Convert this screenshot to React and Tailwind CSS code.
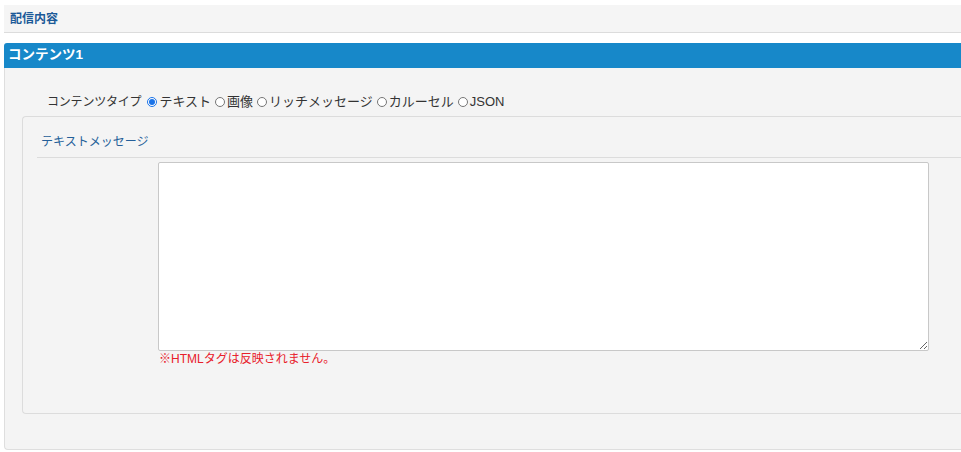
const CONTENT_TYPES = [
  { key: "text", label: "テキスト", checked: true },
  { key: "image", label: "画像" },
  { key: "rich", label: "リッチメッセージ" },
  { key: "carousel", label: "カルーセル" },
  { key: "json", label: "JSON" },
];

function Radio({ checked }) {
  return (
    <span
      className={`mx-[1px] inline-flex h-[10px] w-[10px] shrink-0 items-center justify-center rounded-full border ${
        checked ? "border-[#1a73e8]" : "border-[#767676]"
      } bg-white`}
    >
      {checked && <span className="h-[6px] w-[6px] rounded-full bg-[#1a73e8]" />}
    </span>
  );
}

export default function App() {
  return (
    <div
      className="h-[452px] w-[961px] overflow-hidden bg-white text-[12px] text-[#333]"
      style={{ fontFamily: '"Liberation Sans", "Noto Sans CJK JP", sans-serif' }}
    >
      <div className="ml-[4px] mt-[5px] flex h-[28px] items-center border-b border-[#dcdcdc] bg-[#f5f5f5] pl-[6px]">
        <span className="pt-[1px] font-bold text-[#1c5a98]">配信内容</span>
      </div>

      <div className="ml-[4px] mt-[10px]">
        <div className="flex h-[25px] items-center rounded-tl-[3px] bg-[#1788c9] pl-[4px] text-[13.5px] font-bold text-white">
          コンテンツ1
        </div>

        <div className="h-[382px] rounded-bl-[4px] border-b border-l border-[#dedede] bg-[#f4f4f4] pt-[24px]">
          <div className="flex h-[20px] items-center pl-[42px]">
            <span className="mr-[5px] tracking-[-0.2px]">コンテンツタイプ</span>
            {CONTENT_TYPES.map((type) => (
              <label key={type.key} className="mr-[3px] flex items-center text-[13px]">
                <Radio checked={type.checked} />
                <span className="ml-[1px]">{type.label}</span>
              </label>
            ))}
          </div>

          <div className="ml-[17px] mt-[4px] h-[298px] rounded-l-[4px] border border-r-0 border-[#dcdcdc] bg-[#f4f4f4] pl-[14px]">
            <div className="flex h-[41px] items-end border-b border-[#dcdcdc] pb-[6px] pl-[4px] text-[#245f99]">
              テキストメッセージ
            </div>
            <div className="pl-[121px] pt-[4px]">
              <textarea className="block h-[189px] w-[771px] resize rounded-[2px] border border-[#c8c8c8] bg-white" />
              <p className="mt-[1px] pl-[1px] leading-[14px] text-[#e8202a]">※HTMLタグは反映されません。</p>
            </div>
          </div>
        </div>
      </div>
    </div>
  );
}
